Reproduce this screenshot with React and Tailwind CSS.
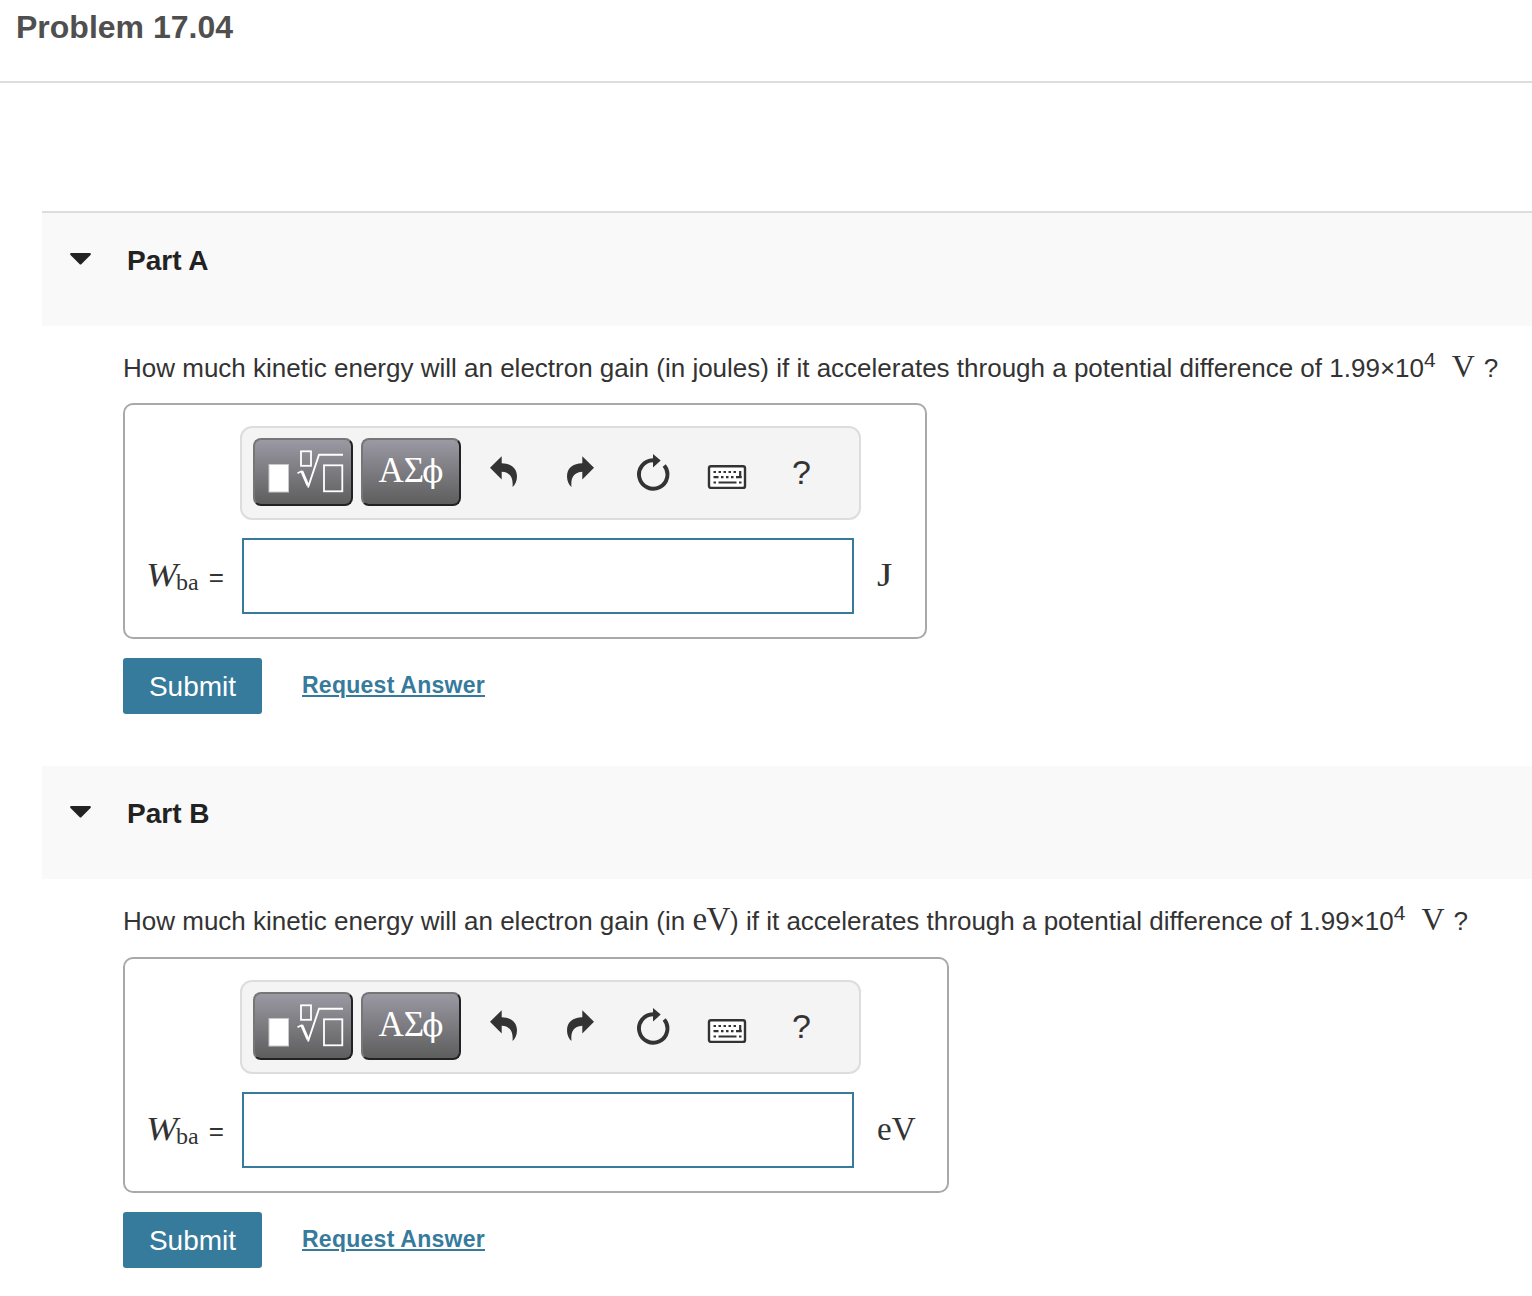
const parts = [
    { id: "A", energyUnit: "joules", unit: "J" },
    { id: "B", energyUnit: "eV", unit: "eV" },
];

function TemplateIcon() {
    return (
        <svg width="96" height="64" viewBox="2 2 96 64" fill="none" stroke="white">
            <rect x="16" y="26.5" width="19.5" height="27.5" fill="white" stroke="#c9c9cc" strokeWidth="1" />
            <rect x="48" y="13.3" width="10" height="14.5" strokeWidth="1.8" />
            <path d="M44.5 35.3 L49 33" strokeWidth="1.6" />
            <path d="M48.7 33 L55 47.5" strokeWidth="3" />
            <path d="M55 49.5 L66 16.7 H90" strokeWidth="1.9" />
            <rect x="71" y="27.3" width="18.3" height="26" strokeWidth="1.8" />
        </svg>
    );
}

function ArrowIcon({ className }) {
    return (
        <svg width="40" height="40" viewBox="0 0 40 40" fill="#333" className={className}>
            <path d="M6 15.7 L17.7 4.3 V11.3 C27 11.5 33 16 33 24.5 C33 29 31 33 28.5 35 C29.2 28 28 20.3 17.7 19.7 V27.5Z" />
        </svg>
    );
}

function ResetIcon() {
    return (
        <svg width="40" height="40" viewBox="0 0 40 40" className="ml-[33px]">
            <path d="M31.2 13.5 A14.2 14.2 0 1 1 20 8.3" fill="none" stroke="#333" strokeWidth="3.9" />
            <path d="M20 2 L27.7 8.6 L20 15.6Z" fill="#333" />
        </svg>
    );
}

function KeyboardIcon() {
    return (
        <svg width="40" height="40" viewBox="0 0 40 40" className="ml-[34px]">
            <rect x="2" y="14.3" width="36" height="21.6" rx="2" fill="white" stroke="#333" strokeWidth="2.4" />
            <path
                d="M6.5 20 h2.5 m2.5 0 h2.5 m2.5 0 h2.5 m2.5 0 h2.5 m2.5 0 h2.5 M6.5 25.2 h5 m2.5 0 h2.5 m2.5 0 h2.5 m2.5 0 h2.5 m2.5 0 h5.8 M33.2 19 v7 M6.5 30.5 h2.5 m2.5 0 h18 m2.5 0 h2.5"
                fill="none"
                stroke="#333"
                strokeWidth="2.2"
            />
        </svg>
    );
}

function ToolButton({ children }) {
    return (
        <button className="flex h-[68px] w-[100px] items-center justify-center rounded-lg border-2 border-t-[#767676] border-r-[#222] border-b-[#222] border-l-[#767676] bg-linear-to-b from-[#9b99a3] to-[#5e5e5e] text-white">
            {children}
        </button>
    );
}

function Toolbar() {
    return (
        <div className="ml-[115px] flex h-[94px] w-[621px] items-start rounded-xl border-2 border-[#ddd] bg-[#f4f4f4] pt-[10px] pl-[11px]">
            <div className="flex gap-2">
                <ToolButton>
                    <TemplateIcon />
                </ToolButton>
                <ToolButton>
                    <span className="flex h-[64px] font-['Liberation_Serif',serif] text-[35px] leading-[62px]">
                        <span className="-mr-[2px]">AΣ</span>
                        <span className="font-['DejaVu_Serif',serif] text-[31px] leading-[62px]">ϕ</span>
                    </span>
                </ToolButton>
            </div>
            <div className="mt-[14px] ml-[23px] flex">
                <ArrowIcon />
                <ArrowIcon className="ml-9 -scale-x-100" />
                <ResetIcon />
                <KeyboardIcon />
                <span className="ml-[45px] text-[34px] leading-[40px] text-[#333]">?</span>
            </div>
        </div>
    );
}

function Serif({ children, className = "" }) {
    return <span className={`font-['Liberation_Serif',serif] leading-none ${className}`}>{children}</span>;
}

function Part({ part }) {
    const isFirst = part.id === "A";
    return (
        <section>
            <div className={`ml-[42px] flex bg-[#f9f9f9] pl-7 ${isFirst ? "h-[115px] border-t-2 border-[#ddd]" : "h-[113px]"}`}>
                <svg width="21" height="12" viewBox="0 0 21 12" className="mt-10" fill="#222">
                    <path d="M1 0 H20 Q21.5 .5 20.5 2 L11.5 11 Q10.5 12 9.5 11 L.5 2 Q-.5 .5 1 0Z" />
                </svg>
                <h2 className="ml-9 pt-8 text-[28px] leading-8 font-bold text-[#222]">Part {part.id}</h2>
            </div>

            <div className="pl-[123px]">
                <p className={`flex items-baseline whitespace-pre text-[26px] leading-[84px] text-[#333] ${isFirst ? "h-[77px]" : "h-[78px]"}`}>
                    <span>How much kinetic energy will an electron gain (in </span>
                    {isFirst ? <span>{part.energyUnit}</span> : <Serif className="text-[33px] tracking-[-0.4px]">{part.energyUnit}</Serif>}
                    <span>) if it accelerates through a potential difference of 1.99×10</span>
                    <span className="relative -top-[10px] text-[21px] leading-none">4</span>
                    <Serif className="ml-[16px] text-[32px]">V</Serif>
                    <span className="ml-[9px]">?</span>
                </p>

                <div className={`h-[236px] rounded-[10px] border-2 border-[#a9a9a9] pt-[21px] ${isFirst ? "w-[804px]" : "w-[826px]"}`}>
                    <Toolbar />
                    <div className="mt-[18px] flex h-[76px] text-[#333]">
                        <div className="flex w-[117px] items-baseline pt-px pl-[21px] leading-[76px]">
                            <Serif className="w-[30px] origin-left scale-x-115 text-[33px] italic">W</Serif>
                            <Serif className="relative top-[4px] text-[24px]">ba</Serif>
                            <span className="ml-[10px] text-[26px]">=</span>
                        </div>
                        <input className="h-[76px] w-[612px] border-2 border-[#367a9c] bg-white outline-none" />
                        <Serif className={`mt-[21px] ml-[23px] origin-left text-[33px] ${isFirst ? "scale-x-120" : ""}`}>{part.unit}</Serif>
                    </div>
                </div>

                <div className="mt-[19px] flex h-14">
                    <button className="h-14 w-[139px] rounded-[3px] bg-[#367a9c] pt-px text-[28px] leading-[55px] text-white">Submit</button>
                    <a className="ml-10 text-[23px] leading-[54px] font-bold tracking-[0.26px] text-[#367a9c] underline decoration-2 underline-offset-2">Request Answer</a>
                </div>
            </div>
        </section>
    );
}

export default function App() {
    return (
        <main className="h-[1296px] w-[1532px] overflow-hidden bg-white font-['Liberation_Sans',sans-serif]">
            <header className="h-[83px] border-b-2 border-[#ddd] pt-[7px] pl-4">
                <h1 className="text-[32px] leading-10 font-bold text-[#4f4f4f]">Problem 17.04</h1>
            </header>
            <div className="flex flex-col gap-[52px] pt-32">
                {parts.map((part) => (
                    <Part key={part.id} part={part} />
                ))}
            </div>
        </main>
    );
}
